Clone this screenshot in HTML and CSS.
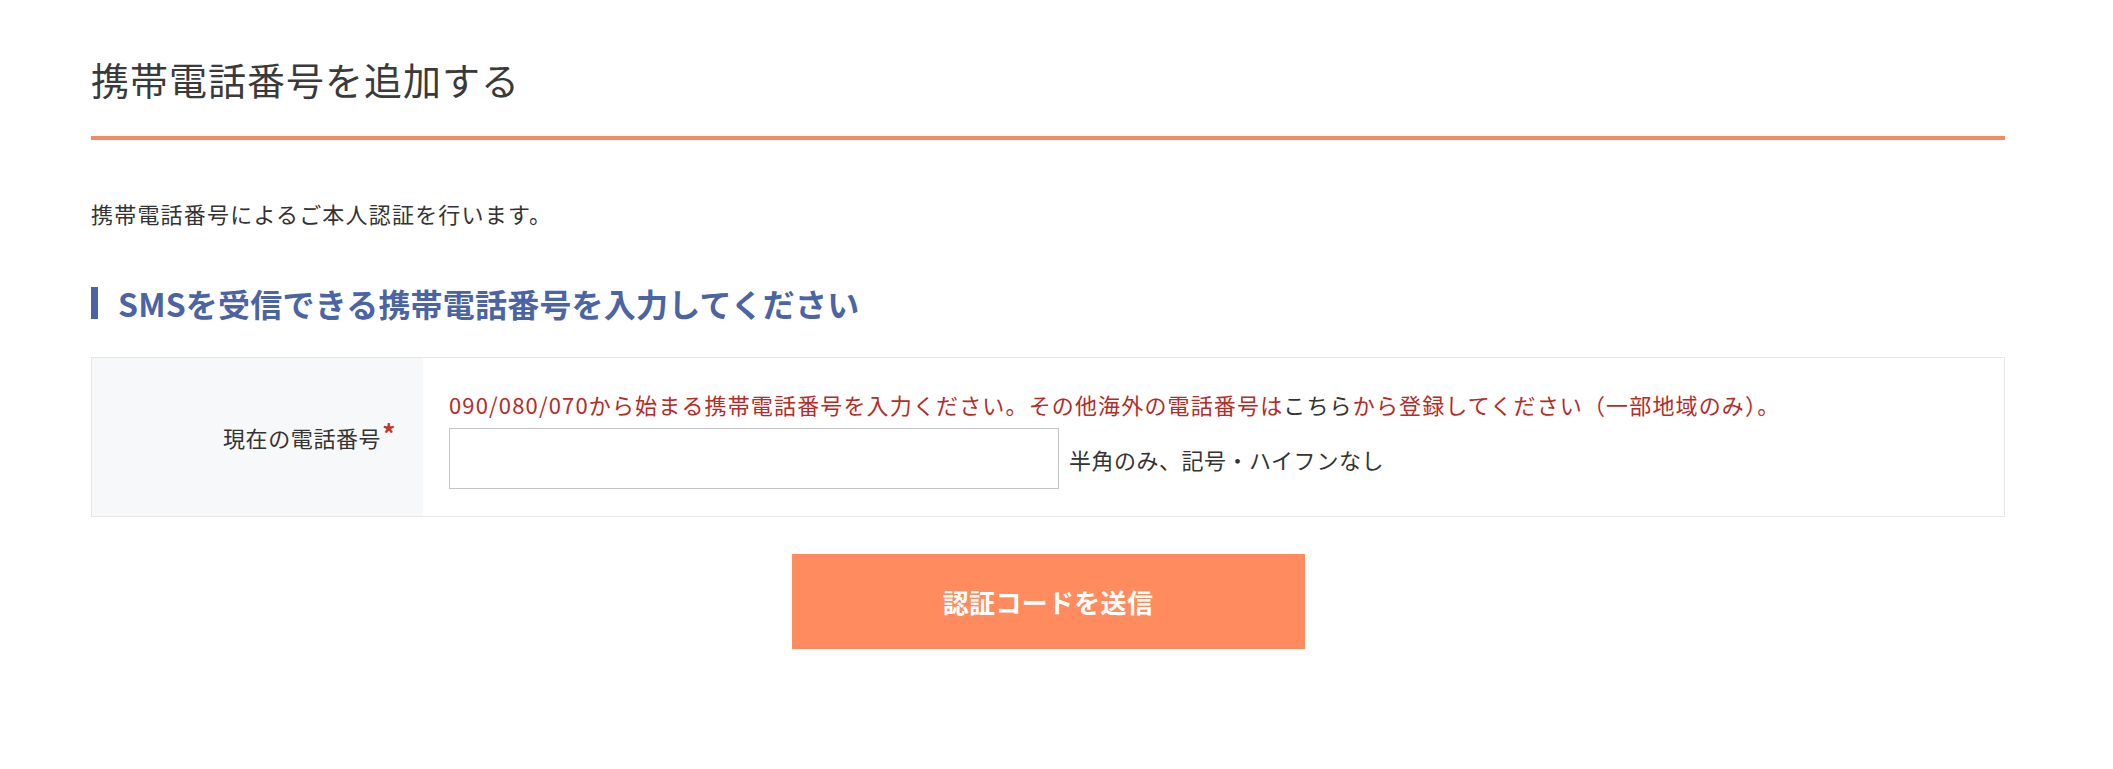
FILE: index.html
```html
<!DOCTYPE html>
<html lang="ja">
<head>
<meta charset="utf-8">
<title>携帯電話番号を追加する</title>
<link rel="stylesheet" href="styles.css">
</head>
<body>
<div class="page">
  <div class="page-head">
    <h1 class="page-title">携帯電話番号を追加する</h1>
  </div>
  <p class="intro">携帯電話番号によるご本人認証を行います。</p>
  <h2 class="section-title">SMSを受信できる携帯電話番号を入力してください</h2>
  <div class="form-table">
    <div class="form-label">現在の電話番号<span class="req">*</span></div>
    <div class="form-value">
      <p class="notice">090/080/070から始まる携帯電話番号を入力ください。その他海外の電話番号は<a class="notice-link" href="#">こちら</a>から登録してください（一部地域のみ）。</p>
      <div class="input-row">
        <input class="tel-input" type="text">
        <span class="hint">半角のみ、記号・ハイフンなし</span>
      </div>
    </div>
  </div>
  <button class="submit-btn" type="button">認証コードを送信</button>
</div>
</body>
</html>
```

FILE: styles.css
```css
* {
  box-sizing: border-box;
}
html, body {
  margin: 0;
  padding: 0;
  background: #ffffff;
}
body {
  font-family: "Noto Sans CJK JP", "Noto Sans", sans-serif;
  color: #333333;
}
.page {
  width: 1914px;
  margin-left: 91px;
  padding-top: 50px;
}
.page-head {
  border-bottom: 4px solid #f48a62;
  padding-bottom: 29px;
}
.page-title {
  margin: 0;
  font-size: 38px;
  font-weight: 400;
  line-height: 57px;
  letter-spacing: 1px;
  color: #3a3a3a;
}
.intro {
  margin: 57px 0 0;
  font-size: 22px;
  line-height: 33px;
  letter-spacing: 1.2px;
  color: #333333;
}
.section-title {
  margin: 57px 0 0;
  border-left: 7px solid #4b64a4;
  padding-left: 20px;
  font-size: 32px;
  font-weight: 700;
  line-height: 32px;
  letter-spacing: 0.2px;
  color: #4b64a4;
}
.form-table {
  margin-top: 38px;
  display: grid;
  grid-template-columns: 331px 1fr;
  border: 1px solid #e6e6e6;
}
.form-label {
  background: #f7f8f9;
  display: flex;
  align-items: center;
  justify-content: flex-end;
  padding-right: 27px;
  font-size: 22px;
  letter-spacing: 0.6px;
  color: #333333;
}
.req {
  color: #c0392b;
  font-size: 26px;
  font-weight: 700;
  align-self: flex-start;
  line-height: 1;
  margin-top: 62px;
  margin-left: 1px;
}
.form-value {
  padding: 34px 20px 27px 26px;
}
.notice {
  margin: 0;
  font-size: 22px;
  line-height: 24px;
  letter-spacing: 1.15px;
  color: #b52b27;
}
.notice-link {
  color: #333333;
  text-decoration: none;
}
.input-row {
  margin-top: 12px;
  display: flex;
  align-items: center;
  gap: 10px;
}
.tel-input {
  width: 610px;
  height: 61px;
  border: 1px solid #c4c4c4;
  background: #ffffff;
  margin: 0;
  padding: 0 10px;
  font-size: 22px;
}
.hint {
  font-size: 22px;
  letter-spacing: 0.5px;
  color: #333333;
}
.submit-btn {
  display: block;
  margin: 37px auto 0;
  width: 513px;
  height: 95px;
  border: none;
  background: #ff8b5e;
  color: #ffffff;
  font-family: "Noto Sans CJK JP", "Noto Sans", sans-serif;
  font-size: 26px;
  font-weight: 700;
  letter-spacing: 0.3px;
  cursor: pointer;
}
```
